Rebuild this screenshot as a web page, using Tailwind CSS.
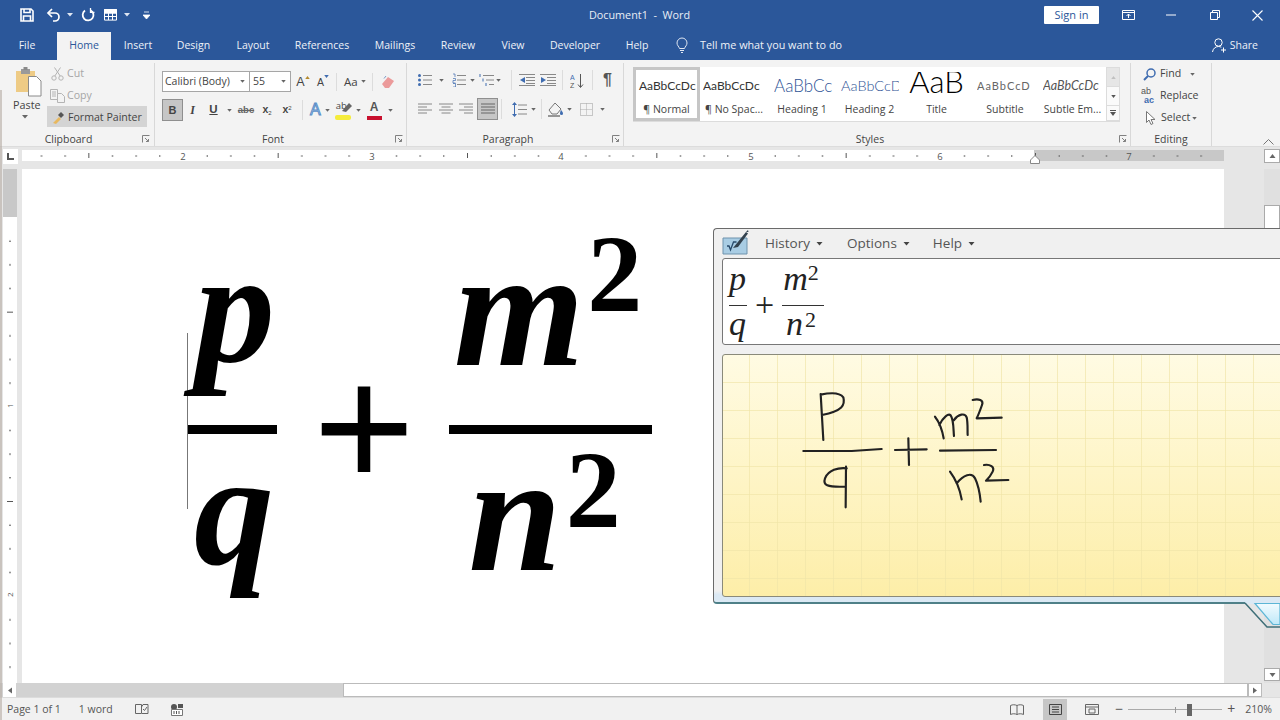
<!DOCTYPE html>
<html>
<head>
<meta charset="utf-8">
<script src="https://cdn.jsdelivr.net/npm/@tailwindcss/browser@4"></script>
</head>
<body class="m-0 overflow-hidden bg-[#e6e6e6]">
<div class="relative w-[1280px] h-[720px] overflow-hidden font-['Open_Sans',sans-serif] text-[#444] flex flex-col">

  <!-- Title bar -->
  <div class="h-[30px] bg-[#2b579a] flex items-center text-white shrink-0 relative">
    <div class="flex items-center pl-[20px]">
      <svg width="14" height="14" viewBox="0 0 14 14" class="block" fill="none" stroke="#fff" stroke-width="1.6"><path d="M1 1h10l2 2v10H1z"/><path d="M4 1v3.5h6V1M3.5 13V8h7v5"/></svg>
      <svg width="16" height="14" viewBox="0 0 16 14" class="block ml-[12px]" fill="none" stroke="#fff" stroke-width="1.7"><path d="M6 1 2 5l4 4"/><path d="M2 5h7a4 4 0 0 1 0 8H7"/></svg>
      <svg width="6" height="4" viewBox="0 0 6 4" class="block ml-[5px]"><path d="M0 0h6L3 3.5z" fill="#dfe6f2"/></svg>
      <svg width="14" height="14" viewBox="0 0 14 14" class="block ml-[8px]" fill="none" stroke="#fff" stroke-width="1.8"><path d="M4 2.6a5.4 5.4 0 1 0 5.5-.4"/><path d="M9.5 0v4.4H13.5" stroke-width="1.3"/></svg>
      <svg width="14" height="12" viewBox="0 0 14 12" class="block ml-[9px]" fill="none" stroke="#fff" stroke-width="1"><path d="M.5.500h12v10.6H.5z"/><path d="M.5 4h12M.5 7.500h12M4.500 1v10M8.500 1v10"/><path d="M.5.5h12v3.500H.5z" fill="#fff"/></svg>
      <svg width="6" height="4" viewBox="0 0 6 4" class="block ml-[6px]"><path d="M0 0h6L3 3.5z" fill="#dfe6f2"/></svg>
      <svg width="7" height="8" viewBox="0 0 7 8" class="block ml-[13px]"><path d="M1 1h5M0 4h7L3.500 8z" fill="#fff" stroke="#fff" stroke-width=".8"/></svg>
    </div>
    <div class="absolute left-[589px] top-[6px] text-[10.800px] leading-[18px] text-[#e9eef6] whitespace-pre">Document1  -  Word</div>
    <div class="ml-auto flex items-center">
      <div class="w-[55px] h-[18px] bg-white rounded-[1px] text-[#2b579a] text-[11px] leading-[18px] text-center">Sign in</div>
      <svg width="13" height="10" viewBox="0 0 13 10" class="block ml-[23px]" fill="none" stroke="#fff"><path d="M.5.500h12v9H.5zM.5 2.500h12"/><path d="M6.500 8V4M4.500 6l2-2 2 2" stroke-width="1"/></svg>
      <svg width="10" height="2" viewBox="0 0 10 2" class="block ml-[31px]"><path d="M0 1h10" stroke="#fff"/></svg>
      <svg width="10" height="10" viewBox="0 0 10 10" class="block ml-[34px]" fill="none" stroke="#fff"><path d="M.5 2.500h7v7h-7zM2.500 2.500v-2h7v7h-2"/></svg>
      <svg width="11" height="11" viewBox="0 0 11 11" class="block ml-[32px] mr-[17px]" stroke="#fff" stroke-width="1.100"><path d="M.5.500l10 10M10.500.500l-10 10"/></svg>
    </div>
  </div>

  <!-- Tabs -->
  <div class="h-[30px] bg-[#2b579a] flex text-[10.500px] leading-[30px] text-[#eef2f8] shrink-0 items-end">
    <div class="w-[57px] text-center h-[30px] pr-[3px]">File</div>
    <div class="w-[54px] text-center h-[28px] leading-[27px] bg-[#f3f3f3] text-[#2b579a]">Home</div>
    <div class="w-[54px] text-center h-[30px]">Insert</div>
    <div class="w-[57px] text-center h-[30px]">Design</div>
    <div class="w-[62px] text-center h-[30px]">Layout</div>
    <div class="w-[76px] text-center h-[30px]">References</div>
    <div class="w-[70px] text-center h-[30px]">Mailings</div>
    <div class="w-[56px] text-center h-[30px]">Review</div>
    <div class="w-[54px] text-center h-[30px]">View</div>
    <div class="w-[70px] text-center h-[30px]">Developer</div>
    <div class="w-[54px] text-center h-[30px]">Help</div>
    <div class="h-[30px] flex items-center ml-[12px]">
      <svg width="12" height="16" viewBox="0 0 12 16" fill="none" stroke="#dfe6f2" class="block"><path d="M3.500 11.500C3 9.500 1 8.500 1 6a5 5 0 0 1 10 0c0 2.500-2 3.500-2.500 5.500zM4 13.500h4M5 15.500h2"/></svg>
      <span class="ml-[12px] text-[10.800px]">Tell me what you want to do</span>
    </div>
    <div class="ml-auto h-[30px] flex items-center pr-[22px]">
      <svg width="15" height="15" viewBox="0 0 15 15" fill="none" stroke="#fff" class="block"><circle cx="6.500" cy="4.500" r="3.700"/><path d="M.5 14c.5-3.500 3-5.500 6-5.500 1 0 2 .3 2.800.7M11.500 9.500v5M9 12h5"/></svg>
      <span class="ml-[3px]">Share</span>
    </div>
  </div>

  <!-- Ribbon -->
  <div class="h-[86px] bg-[#f3f3f3] flex shrink-0 text-[10.600px] text-[#444] relative">
    <!-- Clipboard -->
    <div class="w-[155px] h-[83px] mt-[3px] border-r border-[#d8d8d8] shrink-0 flex flex-col">
      <div class="flex h-[66px] pt-[1px]">
        <div class="w-[47px] pl-[14px] flex flex-col pt-[2px]">
          <svg width="28" height="31" viewBox="0 0 28 31" class="block">
            <path d="M2 5h19v21H2z" fill="#eecb85"/>
            <path d="M7 3h9v5H7z" fill="#9a9a9a"/><path d="M9.500 1h4v3h-4z" fill="#8a8a8a"/>
            <path d="M14.500 10.500h8l4.500 4.500v15H14.500z" fill="#fff" stroke="#8a8a8a"/>
          </svg>
          <div class="text-[10.800px] leading-[14px] -ml-[1px] mt-[1px]">Paste</div>
          <svg width="6" height="4" viewBox="0 0 6 4" class="block ml-[8px] mt-[3px]"><path d="M0 0h6L3 3.500z" fill="#666"/></svg>
        </div>
        <div class="flex flex-col -mt-[2px]">
          <div class="h-[22px] flex items-center pl-[4px] pt-[2px] text-[#a6a6a6]">
            <svg width="13" height="14" viewBox="0 0 13 14" fill="none" stroke="#b4b4b4" class="block"><circle cx="3" cy="11" r="2.200"/><circle cx="10" cy="11" r="2.200"/><path d="M3.800 9 9.500 .5M9.200 9 3.500 .5"/></svg>
            <span class="ml-[3px]">Cut</span>
          </div>
          <div class="h-[22px] flex items-center pl-[3px] pt-[2px] text-[#a6a6a6]">
            <svg width="15" height="14" viewBox="0 0 15 14" fill="none" stroke="#b4b4b4" class="block"><path d="M.5.500h7v10h-7zM2 3h4M2 5h4M2 7h4"/><path d="M7.500 4.500h4l3 3v6h-7z" fill="#f3f3f3"/></svg>
            <span class="ml-[2px]">Copy</span>
          </div>
          <div class="h-[21px] w-[100px] bg-[#d4d4d4] flex items-center pl-[5px] pt-[2px]">
            <svg width="13" height="13" viewBox="0 0 13 13" class="block"><path d="M1 12 7 6l2 2-5 5z" fill="#e8b85e"/><path d="M6 4l3-3 3 3-3 3z" fill="#555"/></svg>
            <span class="ml-[3px] whitespace-nowrap">Format Painter</span>
          </div>
        </div>
      </div>
      <div class="relative h-[14px] leading-[14px] text-[10.500px] text-center mt-[3px] pr-[17px]">Clipboard
        <svg width="8" height="8" viewBox="0 0 8 8" fill="none" stroke="#808080" class="block absolute right-[4px] top-[3px]"><path d="M.5 7.500v-7h7M3 3l3.500 3.500M6.500 4v2.500H4"/></svg>
      </div>
    </div>

    <!-- Font -->
    <div class="w-[252px] h-[83px] mt-[3px] border-r border-[#d8d8d8] shrink-0 flex flex-col pl-[7px]">
      <div class="h-[66px]">
        <div class="flex items-center h-[21px] mt-[8px]">
          <div class="w-[88px] h-[21px] bg-white border border-[#a6a6a6] text-[10.500px] leading-[19px] pl-[2px] flex shrink-0 whitespace-nowrap">Calibri (Body)<svg width="5" height="3" viewBox="0 0 6 4" class="block ml-auto mr-[4px] mt-[8px]"><path d="M0 0h6L3 3.500z" fill="#666"/></svg></div>
          <div class="w-[41px] h-[21px] bg-white border border-[#a6a6a6] border-l-0 text-[10.500px] leading-[19px] pl-[3px] flex shrink-0">55<svg width="5" height="3" viewBox="0 0 6 4" class="block ml-auto mr-[4px] mt-[8px]"><path d="M0 0h6L3 3.500z" fill="#666"/></svg></div>
          <div class="w-[22px] ml-[1px] flex text-[12.500px] leading-[14px] justify-center font-['Liberation_Sans',sans-serif] relative shrink-0"><span>A</span><svg width="5" height="3" viewBox="0 0 6 4" class="block mt-[1px]"><path d="M0 4h6L3 0z" fill="#b58a2c"/></svg></div>
          <div class="w-[18px] flex text-[10.500px] leading-[14px] justify-center font-['Liberation_Sans',sans-serif] shrink-0"><span class="mt-[1px]">A</span><svg width="5" height="3" viewBox="0 0 6 4" class="block mt-[1px]"><path d="M0 0h6L3 4z" fill="#3f6cb0"/></svg></div>
          <div class="w-px h-[18px] bg-[#dcdcdc] ml-[4px]"></div>
          <div class="ml-[7px] text-[11.500px] flex items-center">Aa<svg width="5" height="3" viewBox="0 0 6 4" class="block ml-[3px]"><path d="M0 0h6L3 3.500z" fill="#666"/></svg></div>
          <div class="w-px h-[18px] bg-[#dcdcdc] ml-[6px]"></div>
          <svg width="14" height="14" viewBox="0 0 14 14" class="block ml-[8px]"><path d="M1 9l6-7 6 4-5 7H4z" fill="#eb9a9a"/><path d="M3 3.500 5 1" stroke="#7a9cc8" fill="none"/></svg>
        </div>
        <div class="flex items-center h-[22px] mt-[7px]">
          <div class="w-[21px] h-[22px] bg-[#c6c6c6] border border-[#8f8f8f] text-center text-[11px] font-bold leading-[20px] font-['Liberation_Sans',sans-serif]">B</div>
          <div class="w-[21px] ml-[-1px] text-center italic font-bold text-[12px] font-['Liberation_Serif',serif]">I</div>
          <div class="w-[21px] text-center text-[11.500px] underline font-bold font-['Liberation_Sans',sans-serif]">U</div>
          <svg width="5" height="3" viewBox="0 0 6 4" class="block ml-[3px]"><path d="M0 0h6L3 3.500z" fill="#666"/></svg>
          <div class="w-[22px] ml-[3px] text-center text-[9.500px] line-through font-bold text-[#666] font-['Liberation_Sans',sans-serif]">abc</div>
          <div class="w-[20px] text-center text-[10.500px] font-bold font-['Liberation_Sans',sans-serif]">x<sub class="text-[6px] font-normal">2</sub></div>
          <div class="w-[20px] text-center text-[10.500px] font-bold font-['Liberation_Sans',sans-serif]">x<sup class="text-[6px] font-normal">2</sup></div>
          <div class="w-px h-[20px] bg-[#dcdcdc] ml-[5px]"></div>
          <div class="ml-[7px] text-[16px] leading-[18px] text-[#dce9f7] font-['Liberation_Sans',sans-serif] [-webkit-text-stroke:1px_#5b8fc8]">A</div>
          <svg width="5" height="3" viewBox="0 0 6 4" class="block ml-[4px]"><path d="M0 0h6L3 3.500z" fill="#666"/></svg>
          <div class="relative w-[17px] h-[19px] ml-[5px]"><span class="absolute left-[1px] -top-[1px] text-[9.500px] leading-[12px]">ab</span><svg width="10" height="10" viewBox="0 0 10 10" class="absolute left-[7px] top-[2px]"><path d="M0 8 7 0l3 3-6 6z" fill="#666"/></svg><div class="absolute left-0 bottom-0 w-[16px] h-[5px] bg-[#f5ec3b] rounded-[2px]"></div></div>
          <svg width="5" height="3" viewBox="0 0 6 4" class="block ml-[4px]"><path d="M0 0h6L3 3.500z" fill="#666"/></svg>
          <div class="relative w-[16px] h-[19px] ml-[6px] text-center"><span class="absolute left-[3px] -top-[1px] text-[12px] leading-[15px] font-bold text-[#555] font-['Liberation_Sans',sans-serif]">A</span><div class="absolute left-0 bottom-0 w-[15px] h-[4px] bg-[#c8102e]"></div></div>
          <svg width="5" height="3" viewBox="0 0 6 4" class="block ml-[5px]"><path d="M0 0h6L3 3.500z" fill="#666"/></svg>
        </div>
      </div>
      <div class="relative h-[14px] leading-[14px] text-[10.500px] text-center mt-[3px] pr-[22px]">Font
        <svg width="8" height="8" viewBox="0 0 8 8" fill="none" stroke="#808080" class="block absolute right-[3px] top-[3px]"><path d="M.5 7.500v-7h7M3 3l3.500 3.500M6.500 4v2.500H4"/></svg>
      </div>
    </div>

    <!-- Paragraph -->
    <div class="w-[217px] h-[83px] mt-[3px] border-r border-[#d8d8d8] shrink-0 flex flex-col">
      <div class="h-[66px]">
        <div class="flex items-center h-[20px] mt-[7px] pl-[11px]">
          <svg width="14" height="14" viewBox="0 0 14 14" class="block"><path d="M5 2.500h9M5 7h9M5 11.500h9" stroke="#888"/><circle cx="1.500" cy="2.500" r="1.500" fill="#3f6cb0"/><circle cx="1.500" cy="7" r="1.500" fill="#3f6cb0"/><circle cx="1.500" cy="11.500" r="1.500" fill="#3f6cb0"/></svg>
          <svg width="5" height="3" viewBox="0 0 6 4" class="block ml-[7px]"><path d="M0 0h6L3 3.500z" fill="#666"/></svg>
          <svg width="14" height="14" viewBox="0 0 14 14" class="block ml-[8px]"><path d="M5 2.500h9M5 7h9M5 11.500h9" stroke="#888"/><path d="M1 1h2v3M1 5.500h2.500v2H1V10h2.500M1 10.500h2.500v3.500H1" fill="none" stroke="#3f6cb0" stroke-width=".7"/></svg>
          <svg width="5" height="3" viewBox="0 0 6 4" class="block ml-[4px]"><path d="M0 0h6L3 3.500z" fill="#666"/></svg>
          <svg width="15" height="14" viewBox="0 0 15 14" class="block ml-[4px]"><path d="M4 2.500h11M7 7h8M10 11.500h5" stroke="#888"/><path d="M1 1v3M4 5.500v3M7 10v3" stroke="#3f6cb0"/></svg>
          <svg width="5" height="3" viewBox="0 0 6 4" class="block ml-[2px]"><path d="M0 0h6L3 3.500z" fill="#666"/></svg>
          <div class="w-px h-[20px] bg-[#dcdcdc] ml-[10px]"></div>
          <svg width="16" height="12" viewBox="0 0 16 12" class="block ml-[7px]"><path d="M7 3.500h9M7 6.500h9M7 9.500h9M0 .5h16M0 11.500h16" stroke="#888"/><path d="M6 3v6L1 6z" fill="#3f6cb0"/></svg>
          <svg width="16" height="12" viewBox="0 0 16 12" class="block ml-[5px]"><path d="M7 3.500h9M7 6.500h9M7 9.500h9M0 .5h16M0 11.500h16" stroke="#888"/><path d="M1 3v6l5-3z" fill="#3f6cb0"/></svg>
          <div class="w-px h-[20px] bg-[#dcdcdc] ml-[6px]"></div>
          <div class="w-[29px] flex justify-center"><svg width="15" height="15" viewBox="0 0 15 15" class="block"><path d="M10.500 1v13M8 11.500l2.500 3 2.500-3" stroke="#555" fill="none"/><text x="0" y="7" font-size="7" fill="#3f6cb0" font-family="Liberation Sans">A</text><text x="0" y="14.500" font-size="7" fill="#555" font-family="Liberation Sans">Z</text></svg></div>
          <div class="w-px h-[20px] bg-[#dcdcdc]"></div>
          <div class="ml-[10px] text-[16px] leading-[18px] text-[#555] font-bold font-['Liberation_Sans',sans-serif]">¶</div>
        </div>
        <div class="flex items-center h-[22px] mt-[8px] pl-[11px]">
          <svg width="14" height="12" viewBox="0 0 14 12" class="block"><path d="M0 1h14M0 4h9M0 7h14M0 10h9" stroke="#888"/></svg>
          <svg width="14" height="12" viewBox="0 0 14 12" class="block ml-[7px]"><path d="M0 1h14M2.500 4h9M0 7h14M2.500 10h9" stroke="#888"/></svg>
          <svg width="14" height="12" viewBox="0 0 14 12" class="block ml-[6px]"><path d="M0 1h14M5 4h9M0 7h14M5 10h9" stroke="#888"/></svg>
          <div class="w-[21px] h-[22px] bg-[#c6c6c6] border border-[#8f8f8f] flex items-center justify-center ml-[4px]"><svg width="14" height="12" viewBox="0 0 14 12" class="block"><path d="M0 1h14M0 4h14M0 7h14M0 10h14" stroke="#666"/></svg></div>
          <div class="w-px h-[20px] bg-[#dcdcdc] ml-[3px]"></div>
          <svg width="15" height="15" viewBox="0 0 15 15" class="block ml-[10px]"><path d="M6 3h9M6 7.500h9M6 12h9" stroke="#888"/><path d="M2.500 2v11" stroke="#3f6cb0"/><path d="M0 3l2.500-3L5 3zM0 12l2.500 3L5 12z" fill="#3f6cb0"/></svg>
          <svg width="5" height="3" viewBox="0 0 6 4" class="block ml-[4px]"><path d="M0 0h6L3 3.500z" fill="#666"/></svg>
          <div class="w-px h-[20px] bg-[#dcdcdc] ml-[5px]"></div>
          <svg width="16" height="16" viewBox="0 0 16 16" class="block ml-[6px]" fill="none"><path d="M1 9 7 2l6 6-4 5H4z" stroke="#777"/><path d="M13 9s2 2 2 3.500a1.500 1.500 0 0 1-3 0C12 11 13 9 13 9z" fill="#3f6cb0"/><path d="M0 15h12" stroke="#777" stroke-width="1.500"/></svg>
          <svg width="5" height="3" viewBox="0 0 6 4" class="block ml-[3px]"><path d="M0 0h6L3 3.500z" fill="#666"/></svg>
          <svg width="13" height="13" viewBox="0 0 13 13" class="block ml-[8px]"><path d="M.5.500h12v12H.5z" fill="none" stroke="#999" stroke-dasharray="1 1"/><path d="M.5 6.500h12M6.500.5v12" stroke="#aaa" stroke-dasharray="1 1"/></svg>
          <svg width="5" height="3" viewBox="0 0 6 4" class="block ml-[7px]"><path d="M0 0h6L3 3.500z" fill="#666"/></svg>
        </div>
      </div>
      <div class="relative h-[14px] leading-[14px] text-[10.500px] text-center mt-[3px] pr-[14px]">Paragraph
        <svg width="8" height="8" viewBox="0 0 8 8" fill="none" stroke="#808080" class="block absolute right-[3px] top-[3px]"><path d="M.5 7.500v-7h7M3 3l3.500 3.500M6.500 4v2.500H4"/></svg>
      </div>
    </div>

    <!-- Styles -->
    <div class="w-[507px] h-[83px] mt-[3px] border-r border-[#d8d8d8] shrink-0 flex flex-col">
      <div class="h-[66px] pl-[9px] pt-[4px]">
        <div class="flex h-[55px] w-[487px] border-b border-[#dcdcdc]">
          <div class="w-[473px] h-[54px] bg-white flex text-center font-['Lato',sans-serif]">
            <div class="w-[67px] h-[54px] border-[3px] border-[#c6c6c6] flex flex-col overflow-hidden shrink-0">
              <div class="h-[31px] leading-[31px] text-[12px] text-[#333] whitespace-nowrap overflow-hidden pl-[3px] text-left">AaBbCcDc</div>
              <div class="text-[10.500px] leading-[14px] font-['Open_Sans',sans-serif] mt-[1px]">¶ Normal</div>
            </div>
            <div class="w-[68px] h-[54px] pt-[3px] px-[3px] flex flex-col overflow-hidden shrink-0">
              <div class="h-[31px] leading-[31px] text-[12px] text-[#333] whitespace-nowrap overflow-hidden text-left">AaBbCcDc</div>
              <div class="text-[10.500px] leading-[14px] font-['Open_Sans',sans-serif] mt-[1px] whitespace-nowrap">¶ No Spac...</div>
            </div>
            <div class="w-[67px] h-[54px] pt-[3px] pl-[6px] pr-[2px] flex flex-col overflow-hidden shrink-0">
              <div class="h-[31px] leading-[31px] text-[17px] font-light text-[#2f5496] whitespace-nowrap overflow-hidden text-left">AaBbCc</div>
              <div class="text-[10.500px] leading-[14px] font-['Open_Sans',sans-serif] mt-[1px] whitespace-nowrap -ml-[3px]">Heading 1</div>
            </div>
            <div class="w-[68px] h-[54px] pt-[3px] pl-[6px] pr-[4px] flex flex-col overflow-hidden shrink-0">
              <div class="h-[31px] leading-[31px] text-[14.500px] font-light text-[#2f5496] whitespace-nowrap overflow-hidden text-left">AaBbCcD</div>
              <div class="text-[10.500px] leading-[14px] font-['Open_Sans',sans-serif] mt-[1px] whitespace-nowrap -ml-[1px]">Heading 2</div>
            </div>
            <div class="w-[67px] h-[54px] flex flex-col shrink-0">
              <div class="h-[27px] leading-[18px] text-[31px] font-light text-black whitespace-nowrap overflow-hidden mt-[5px]">AaB</div>
              <div class="text-[10.500px] leading-[14px] font-['Open_Sans',sans-serif] whitespace-nowrap mt-[3px]">Title</div>
            </div>
            <div class="w-[68px] h-[54px] pt-[3px] pl-[7px] pr-[2px] flex flex-col overflow-hidden shrink-0">
              <div class="h-[31px] leading-[31px] text-[11px] tracking-[1px] text-[#666] whitespace-nowrap overflow-hidden text-left">AaBbCcD</div>
              <div class="text-[10.500px] leading-[14px] font-['Open_Sans',sans-serif] mt-[1px] whitespace-nowrap -ml-[3px]">Subtitle</div>
            </div>
            <div class="w-[68px] h-[54px] pt-[3px] pl-[5px] pr-[2px] flex flex-col overflow-hidden shrink-0">
              <div class="h-[31px] leading-[31px] text-[12.500px] italic text-[#555] whitespace-nowrap overflow-hidden text-left">AaBbCcDc</div>
              <div class="text-[10.500px] leading-[14px] font-['Open_Sans',sans-serif] mt-[1px] whitespace-nowrap -ml-[2px]">Subtle Em...</div>
            </div>
          </div>
          <div class="w-[14px] flex flex-col">
            <div class="h-[20px] bg-[#e6e6e6] border border-[#dcdcdc] flex items-center justify-center"><svg width="5" height="3" viewBox="0 0 6 4"><path d="M0 4h6L3 0z" fill="#c0c0c0"/></svg></div>
            <div class="h-[18px] bg-[#fafafa] border-x border-[#dcdcdc] flex items-center justify-center"><svg width="5" height="3" viewBox="0 0 6 4"><path d="M0 0h6L3 4z" fill="#555"/></svg></div>
            <div class="h-[16px] bg-[#fafafa] border border-[#dcdcdc] flex items-center justify-center"><svg width="6" height="6" viewBox="0 0 6 6"><path d="M0 .5h6" stroke="#555"/><path d="M0 2h6L3 6z" fill="#555"/></svg></div>
          </div>
        </div>
      </div>
      <div class="relative h-[14px] leading-[14px] text-[10.500px] text-center mt-[3px] pr-[14px]">Styles
        <svg width="8" height="8" viewBox="0 0 8 8" fill="none" stroke="#808080" class="block absolute right-[3px] top-[3px]"><path d="M.5 7.500v-7h7M3 3l3.500 3.500M6.500 4v2.500H4"/></svg>
      </div>
    </div>

    <!-- Editing -->
    <div class="w-[81px] h-[83px] mt-[3px] border-r border-[#d8d8d8] shrink-0 flex flex-col">
      <div class="h-[66px]">
        <div class="h-[22px] flex items-center pl-[12px]">
          <svg width="13" height="13" viewBox="0 0 13 13" fill="none" class="block"><circle cx="8" cy="5" r="4" stroke="#3f6cb0" stroke-width="1.500"/><path d="M5 8 1 12" stroke="#3f6cb0" stroke-width="2"/></svg>
          <span class="ml-[4px]">Find</span>
          <svg width="5" height="3" viewBox="0 0 6 4" class="block ml-[9px]"><path d="M0 0h6L3 3.500z" fill="#666"/></svg>
        </div>
        <div class="h-[22px] flex items-center pl-[10px]">
          <div class="w-[15px] text-[9px] leading-[9px] text-[#3f6cb0] font-['Liberation_Sans',sans-serif]"><span class="text-[#555] block">ab</span><span class="font-bold ml-[3px] block">ac</span></div>
          <span class="ml-[4px]">Replace</span>
        </div>
        <div class="h-[22px] flex items-center pl-[15px]">
          <svg width="10" height="14" viewBox="0 0 10 14" fill="#fff" stroke="#777" class="block"><path d="M.5.500v11l2.500-2.500 2 4.500 2-1-2-4h4z"/></svg>
          <span class="ml-[5px]">Select</span>
          <svg width="5" height="3" viewBox="0 0 6 4" class="block ml-[2px]"><path d="M0 0h6L3 3.500z" fill="#666"/></svg>
        </div>
      </div>
      <div class="h-[14px] leading-[14px] text-[10.500px] text-center mt-[3px]">Editing</div>
    </div>

    <svg width="11" height="6" viewBox="0 0 11 6" class="block absolute left-[1263px] top-[79px]" fill="none" stroke="#777"><path d="M.5 5.500l5-5 5 5"/></svg>
  </div>

  <!-- Ruler + document -->
  <div class="flex-1 flex flex-col bg-[#e6e6e6] min-h-0">
    <div class="h-[20px] flex shrink-0 pt-[2px] bg-[#e6e6e6] border-t border-[#dcdcdc] relative">
      <div class="w-[15px] h-[15px] ml-[3px] bg-white flex items-center justify-center shrink-0"><svg width="7" height="7" viewBox="0 0 7 7"><path d="M1 0v6h6" fill="none" stroke="#555" stroke-width="2"/></svg></div>
      <svg width="1202" height="11" viewBox="22 0 1202 11" class="block ml-[4px] mt-[1px]">
        <rect x="22" y="0" width="1012" height="11" fill="#fff"/>
        <rect x="1034" y="0" width="190" height="11" fill="#c8c8c8"/>
        <defs><pattern id="rt" x="88.340" y="0" width="189.330" height="11" patternUnits="userSpaceOnUse">
          <rect x="0" y="3" width="1" height="5" fill="#555"/>
          <rect x="23.660" y="5" width="1" height="2" fill="#666"/><rect x="47.330" y="5" width="1" height="2" fill="#666"/><rect x="71" y="5" width="1" height="2" fill="#666"/>
          <rect x="118.330" y="5" width="1" height="2" fill="#666"/><rect x="142" y="5" width="1" height="2" fill="#666"/><rect x="165.660" y="5" width="1" height="2" fill="#666"/>
        </pattern></defs>
        <rect x="22" y="0" width="1202" height="11" fill="url(#rt)"/>
        <g font-size="9.500" fill="#555" font-family="Open Sans" text-anchor="middle"><rect x="177" y="0" width="12" height="11" fill="#fff"/><text x="183" y="9.500">2</text><rect x="366" y="0" width="12" height="11" fill="#fff"/><text x="372" y="9.500">3</text><rect x="555" y="0" width="12" height="11" fill="#fff"/><text x="561" y="9.500">4</text><rect x="745" y="0" width="12" height="11" fill="#fff"/><text x="751" y="9.500">5</text><rect x="934" y="0" width="12" height="11" fill="#fff"/><text x="940" y="9.500">6</text><rect x="1123" y="0" width="12" height="11" fill="#c8c8c8"/><text x="1129" y="9.500">7</text></g>
      </svg>
      <svg width="10" height="9" viewBox="0 0 10 9" class="block absolute left-[1030px] top-[8px]"><path d="M5 .5 9.500 5v3.500H.5V5z" fill="#fff" stroke="#888"/></svg>
      <div class="w-[16px] h-[14px] ml-[40px] bg-white border border-[#aaa] flex items-center justify-center shrink-0"><svg width="7" height="4" viewBox="0 0 6 4"><path d="M0 4h6L3 0z" fill="#666"/></svg></div>
    </div>

    <div class="flex-1 flex min-h-0">
      <!-- vertical ruler -->
      <svg width="14" height="514" viewBox="0 169 14 514" class="block ml-[3px] shrink-0 mt-[3px]">
        <rect x="0" y="169" width="14" height="514" fill="#fff"/>
        <rect x="0" y="169" width="14" height="48" fill="#c8c8c8"/>
        <defs><pattern id="rv" x="0" y="217" width="14" height="189.330" patternUnits="userSpaceOnUse">
          <rect x="6" y="23.660" width="2" height="1" fill="#555"/><rect x="6" y="47.330" width="2" height="1" fill="#555"/><rect x="6" y="71" width="2" height="1" fill="#555"/>
          <rect x="4" y="94.660" width="6" height="1" fill="#555"/>
          <rect x="6" y="118.330" width="2" height="1" fill="#555"/><rect x="6" y="142" width="2" height="1" fill="#555"/><rect x="6" y="165.660" width="2" height="1" fill="#555"/>
        </pattern></defs>
        <rect x="0" y="217" width="14" height="466" fill="url(#rv)"/>
        <g fill="#555" font-family="Open Sans" font-size="8"><text transform="translate(10 408) rotate(-90)">1</text><text transform="translate(10 597) rotate(-90)">2</text></g>
      </svg>

      <!-- page area -->
      <div class="flex-1 flex flex-col min-w-0">
        <div class="flex flex-1 min-h-0 pt-[3px]">
          <div class="w-[1202px] ml-[5px] bg-white h-[514px] shrink-0 relative pt-[58px] pl-[165px]">
            <!-- equation -->
            <div class="flex items-center font-['Liberation_Serif',serif] text-black relative">
              <div class="absolute left-0 top-[106px] w-px h-[176px] bg-[#777]"></div>
              <div class="flex flex-col items-center w-[90px]">
                <div class="h-[198px] text-[160px] leading-[198px] italic font-bold"><span class="block -translate-y-[18px] translate-x-[3px]">p</span></div>
                <div class="w-[89px] h-[9px] bg-black"></div>
                <div class="h-[178px] text-[160px] leading-[178px] italic font-bold"><span class="block -translate-y-[13px] translate-x-[2px]">q</span></div>
              </div>
              <div class="w-[172px] text-center text-[174px] leading-[170px] font-['Liberation_Sans',sans-serif] font-normal -mt-[10px] shrink-0 translate-y-[12px] translate-x-[1px]">+</div>
              <div class="flex flex-col items-center w-[203px]">
                <div class="h-[198px] italic font-bold flex items-end"><span class="text-[168px] leading-[198px] -translate-y-[18px] -translate-x-[4px]">m</span><span class="text-[110px] leading-[110px] font-bold not-italic -translate-y-[96px] -translate-x-[1px]">2</span></div>
                <div class="w-[203px] h-[9px] bg-black"></div>
                <div class="h-[178px] italic font-bold flex items-start"><span class="text-[168px] leading-[178px] -translate-y-[10px] -translate-x-[8px]">n</span><span class="text-[110px] leading-[110px] font-bold not-italic translate-y-[1px] -translate-x-[4px]">2</span></div>
              </div>
            </div>
          </div>
          <!-- vertical scrollbar -->
          <div class="w-[16px] ml-[40px] flex flex-col shrink-0 bg-[#e0e0e0]">
            <div class="h-[36px]"></div>
            <div class="h-[24px] bg-white border border-[#aaa]"></div>
            <div class="flex-1"></div>
            <div class="h-[13px] mb-[2px] bg-white border border-[#aaa] flex items-center justify-center"><svg width="7" height="4" viewBox="0 0 6 4"><path d="M0 0h6L3 4z" fill="#666"/></svg></div>
          </div>
        </div>
      </div>
    </div>

    <!-- horizontal scrollbar -->
    <div class="h-[14px] flex shrink-0 bg-[#d2d2d2]">
      <div class="w-[13px] ml-[3px] bg-white flex items-center justify-center"><svg width="4" height="7" viewBox="0 0 4 6"><path d="M4 0v6L0 3z" fill="#666"/></svg></div>
      <div class="w-[327px]"></div>
      <div class="w-[905px] bg-white border border-[#bbb]"></div>
      <div class="w-[14px] bg-white border border-[#bbb] flex items-center justify-center"><svg width="4" height="7" viewBox="0 0 4 6"><path d="M0 0v6l4-3z" fill="#666"/></svg></div>
      <div class="flex-1 bg-[#e6e6e6]"></div>
    </div>

    <!-- status bar -->
    <div class="h-[23px] bg-[#f1f1f1] flex items-center text-[10.500px] text-[#555] shrink-0 border-t border-[#dcdcdc] pt-[1px]">
      <span class="ml-[7px]">Page 1 of 1</span>
      <span class="ml-[18px]">1 word</span>
      <svg width="14" height="12" viewBox="0 0 14 12" fill="none" stroke="#666" class="block ml-[22px]"><path d="M.5.500h6v9h-6zM7 2.500 8 .5h5v9H7"/><path d="M8 5l1.500 1.500L12 3" /></svg>
      <svg width="12" height="12" viewBox="0 0 12 12" class="block ml-[22px]"><circle cx="3" cy="3" r="3" fill="#555"/><path d="M.5 5.500h11v6H.5z" fill="#fff" stroke="#777"/><path d="M7 0h5v4H7z" fill="#555"/><path d="M3 7v3M5.500 7v3M8 7v3" stroke="#555"/></svg>
      <div class="ml-auto flex items-center">
        <svg width="14" height="11" viewBox="0 0 14 11" fill="none" stroke="#666"><path d="M.5 1.500c2-1 4.500-1 6.500 0 2-1 4.500-1 6.500 0v9c-2-1-4.500-1-6.500 0-2-1-4.500-1-6.500 0zM7 1.500v9"/></svg>
        <div class="w-[24px] h-[21px] bg-[#c6c6c6] ml-[19px] flex items-center justify-center"><svg width="13" height="11" viewBox="0 0 13 11" fill="none" stroke="#444"><path d="M.5.500h12v10H.5zM3 3h7M3 5.500h7M3 8h7"/></svg></div>
        <svg width="14" height="11" viewBox="0 0 14 11" fill="none" stroke="#666" class="ml-[18px]"><path d="M.5.500h13v10H.5zM.5 3h13M4 5h6v4H4z"/></svg>
        <span class="ml-[16px] text-[14px] leading-[14px] -mt-[2px]">−</span>
        <div class="relative w-[94px] h-[12px] ml-[5px] flex items-center"><div class="w-full h-px bg-[#aaa]"></div><div class="absolute left-[47px] top-[3px] w-px h-[6px] bg-[#999]"></div><div class="absolute left-[59px] top-0 w-[5px] h-[12px] bg-[#666]"></div></div>
        <span class="ml-[5px] text-[14px] leading-[14px] -mt-[2px]">+</span>
        <span class="ml-[10px] mr-[8px] text-[10.500px]">210%</span>
      </div>
    </div>
  </div>

  <!-- window-edge strip -->
  <div class="absolute left-0 top-[90px] w-[2px] h-[630px] bg-[#b5aca4]/60"></div>

  <!-- Math Input Panel (floating window) -->
  <div class="absolute left-[713px] top-[228px] w-[620px] h-[376px] bg-gradient-to-b from-[#f0f0f0] from-[97%] to-[#dbe9f4] to-[98%] border border-[#6a6a6a] border-b-[#4f8088] border-b-2 border-r-0 rounded-[4px] flex flex-col pl-[8px]">
    <div class="h-[29px] flex items-center text-[13.500px] text-[#555] shrink-0 -ml-[8px]">
      <svg width="28" height="25" viewBox="0 0 28 25" class="block ml-[8px] mt-[-3px]"><path d="M1 8h24v16H1z" fill="#a9cde4" stroke="#6f93ad"/><path d="M5 16h2l1.500 4 3-8h3" fill="none" stroke="#27496a" stroke-width="1.300"/><path d="M11 18 24 2l2 1.500L16 17z" fill="#33424f"/><path d="M24 2l2-2 .500 2z" fill="#33424f"/></svg>
      <span class="ml-[15px]">History</span>
      <svg width="7" height="4" viewBox="0 0 6 4" class="block ml-[6px] mt-[1px]"><path d="M0 0h6L3 3.500z" fill="#444"/></svg>
      <span class="ml-[24px]">Options</span>
      <svg width="7" height="4" viewBox="0 0 6 4" class="block ml-[6px] mt-[1px]"><path d="M0 0h6L3 3.500z" fill="#444"/></svg>
      <span class="ml-[23px]">Help</span>
      <svg width="7" height="4" viewBox="0 0 6 4" class="block ml-[6px] mt-[1px]"><path d="M0 0h6L3 3.500z" fill="#444"/></svg>
    </div>
    <!-- preview -->
    <div class="h-[87px] bg-white border border-[#777] rounded-[3px] shrink-0 flex items-start pl-[4px] font-['Liberation_Serif',serif] text-[#222] italic">
      <div class="flex flex-col items-center w-[19px] ml-[1px]">
        <div class="text-[34px] leading-[36px] h-[46px] pt-[2px]">p</div>
        <div class="w-[18px] h-px bg-[#333]"></div>
        <div class="text-[34px] leading-[36px] h-[38px]">q</div>
      </div>
      <div class="w-[35px] text-center text-[34px] leading-[34px] not-italic font-['Liberation_Serif',serif] shrink-0 self-center translate-y-[3px]">+</div>
      <div class="flex flex-col items-center w-[42px]">
        <div class="h-[46px] flex items-start pt-[2px] -translate-x-[2px]"><span class="text-[34px] leading-[36px]">m</span><span class="text-[22px] leading-[22px] not-italic mt-[1px]">2</span></div>
        <div class="w-[42px] h-px bg-[#333]"></div>
        <div class="h-[38px] flex items-start -translate-x-[2px]"><span class="text-[34px] leading-[36px]">n</span><span class="text-[22px] leading-[22px] not-italic mt-[3px] ml-[2px]">2</span></div>
      </div>
    </div>
    <!-- pad -->
    <div class="mt-[9px] h-[243px] border border-[#8a8a7a] rounded-[3px] shrink-0 bg-gradient-to-b from-[#fffbe3] to-[#fdeea8] relative overflow-hidden">
      <div class="absolute inset-0 bg-[linear-gradient(to_right,#f0e5a8aa_1px,transparent_1px),linear-gradient(to_bottom,#f0e5a8aa_1px,transparent_1px)] bg-[size:28px_28px] bg-[position:26px_27px]"></div>
      <svg width="260" height="150" viewBox="0 0 780 450" class="block absolute left-[57px] top-[15px]" fill="none" stroke="#222" stroke-width="6.500" stroke-linecap="round" stroke-linejoin="round">
        <path d="M130 210 122 72M122 74C150 68 180 68 190 82 196 105 188 122 126 135"/>
        <path d="M70 243 215 243 305 237"/>
        <path d="M345 240 440 238M385 205 387 285"/>
        <path d="M465 140C478 155 488 185 491 205M478 165C490 140 505 130 512 136 522 150 520 185 522 198M522 150C535 132 555 128 560 142 564 160 562 180 563 195"/>
        <path d="M578 90C595 85 612 90 606 105 600 122 595 135 590 145L665 143"/>
        <path d="M480 242 648 240"/>
        <path d="M200 295C175 292 145 300 135 325 128 345 140 352 195 350M198 290 197 412"/>
        <path d="M510 305C525 325 540 360 545 388M530 340C550 315 575 305 585 325 595 345 600 375 602 395"/>
        <path d="M612 285C630 282 645 290 638 305 632 318 625 325 618 332L685 330"/>
      </svg>
    </div>
  </div>
  <!-- panel's corner tab -->
  <svg width="40" height="30" viewBox="0 0 40 30" class="block absolute left-[1240px] top-[600px]">
    <defs><linearGradient id="tabfill" x1="0" y1="0" x2="0" y2="1"><stop offset="0" stop-color="#f2fbff"/><stop offset="1" stop-color="#bfe8f8"/></linearGradient></defs>
    <path d="M5 0H40V4H5z" fill="#dbe9f4"/>
    <path d="M5 3 27 27H40" fill="none" stroke="#3f6f78" stroke-width="1.500"/>
    <path d="M15 3.500H40V24.500H33z" fill="url(#tabfill)" stroke="#5cb6d6" stroke-width="1.200"/>
  </svg>
</div>
</body>
</html>
